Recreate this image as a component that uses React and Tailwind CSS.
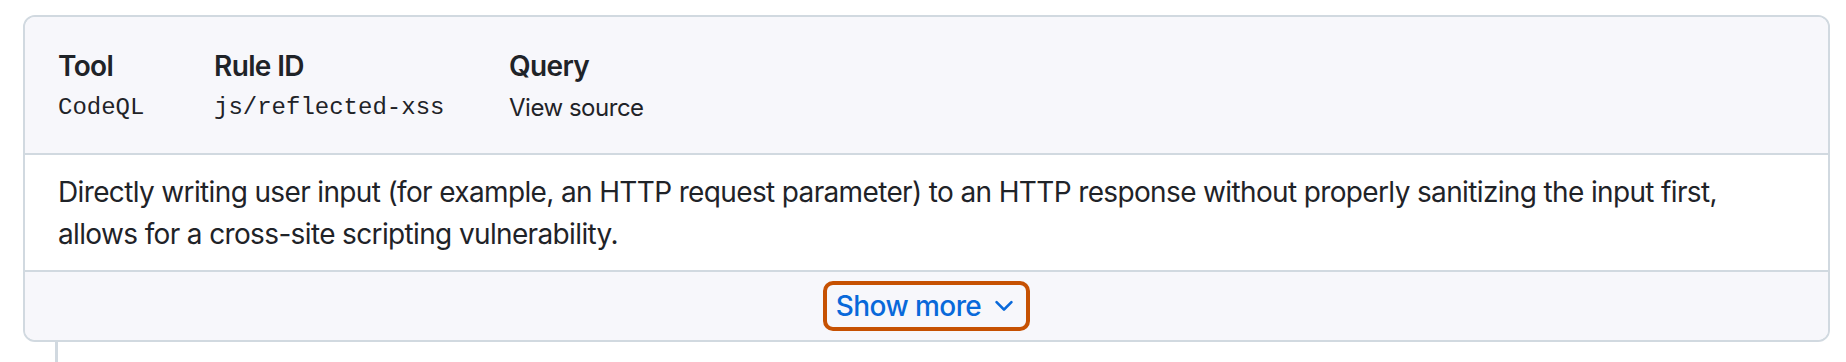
import React from "react";

function ChevronDown({ className }) {
  return (
    <svg viewBox="0 0 16 16" className={className} fill="currentColor" aria-hidden="true">
      <path d="M12.78 5.22a.749.749 0 0 1 0 1.06l-4.25 4.25a.749.749 0 0 1-1.06 0L3.22 6.28a.749.749 0 1 1 1.06-1.06L8 8.939l3.72-3.719a.749.749 0 0 1 1.06 0Z" />
    </svg>
  );
}

const columns = [
  { label: "Tool", value: "CodeQL", mono: true, width: "w-[156px]" },
  { label: "Rule ID", value: "js/reflected-xss", mono: true, width: "w-[295px]" },
  { label: "Query", value: "View source", mono: false, width: "" },
];

export default function App() {
  return (
    <div className="min-h-screen bg-white pt-[15px] pl-[23px] pr-[16px] text-[#1f2328] font-['Inter','Liberation_Sans',sans-serif] tracking-[-0.04em]">
      <div className="rounded-[12px] border-2 border-[#d1d9e0] overflow-hidden">
        {/* rule meta */}
        <div className="flex bg-[#f7f7fb] pl-[33px] pt-[28px] pb-[27px]">
          {columns.map((col) => (
            <div key={col.label} className={`flex flex-col gap-[3px] ${col.width}`}>
              <p className="text-[28px] leading-[42px] font-semibold">{col.label}</p>
              <p
                className={
                  col.mono
                    ? "text-[24px] leading-[36px] tracking-normal font-['Liberation_Mono',monospace]"
                    : "text-[24px] leading-[36px] tracking-[-0.02em]"
                }
              >
                {col.value}
              </p>
            </div>
          ))}
        </div>

        {/* description */}
        <div className="border-t-2 border-[#d1d9e0] bg-white pl-[33px] pr-[32px] pt-[16px] pb-[15px]">
          <p className="text-[28px] leading-[42px]">
            Directly writing user input (for example, an HTTP request parameter) to an HTTP response without properly sanitizing the input first, allows for a cross-site scripting vulnerability.
          </p>
        </div>

        {/* show more */}
        <div className="border-t-2 border-[#d1d9e0] bg-[#f7f7fb] h-[70px] flex items-center justify-center">
          <button className="flex items-center gap-[9px] h-[50px] pl-[9px] pr-[8px] border-4 border-[#c65102] rounded-[10px] text-[#0969da] text-[28px] font-medium tracking-[-0.02em]">
            Show more
            <ChevronDown className="w-[28px] h-[28px]" />
          </button>
        </div>
      </div>
      <div className="ml-[32px] w-[3px] h-[20px] bg-[#d1d9e0]" />
    </div>
  );
}
